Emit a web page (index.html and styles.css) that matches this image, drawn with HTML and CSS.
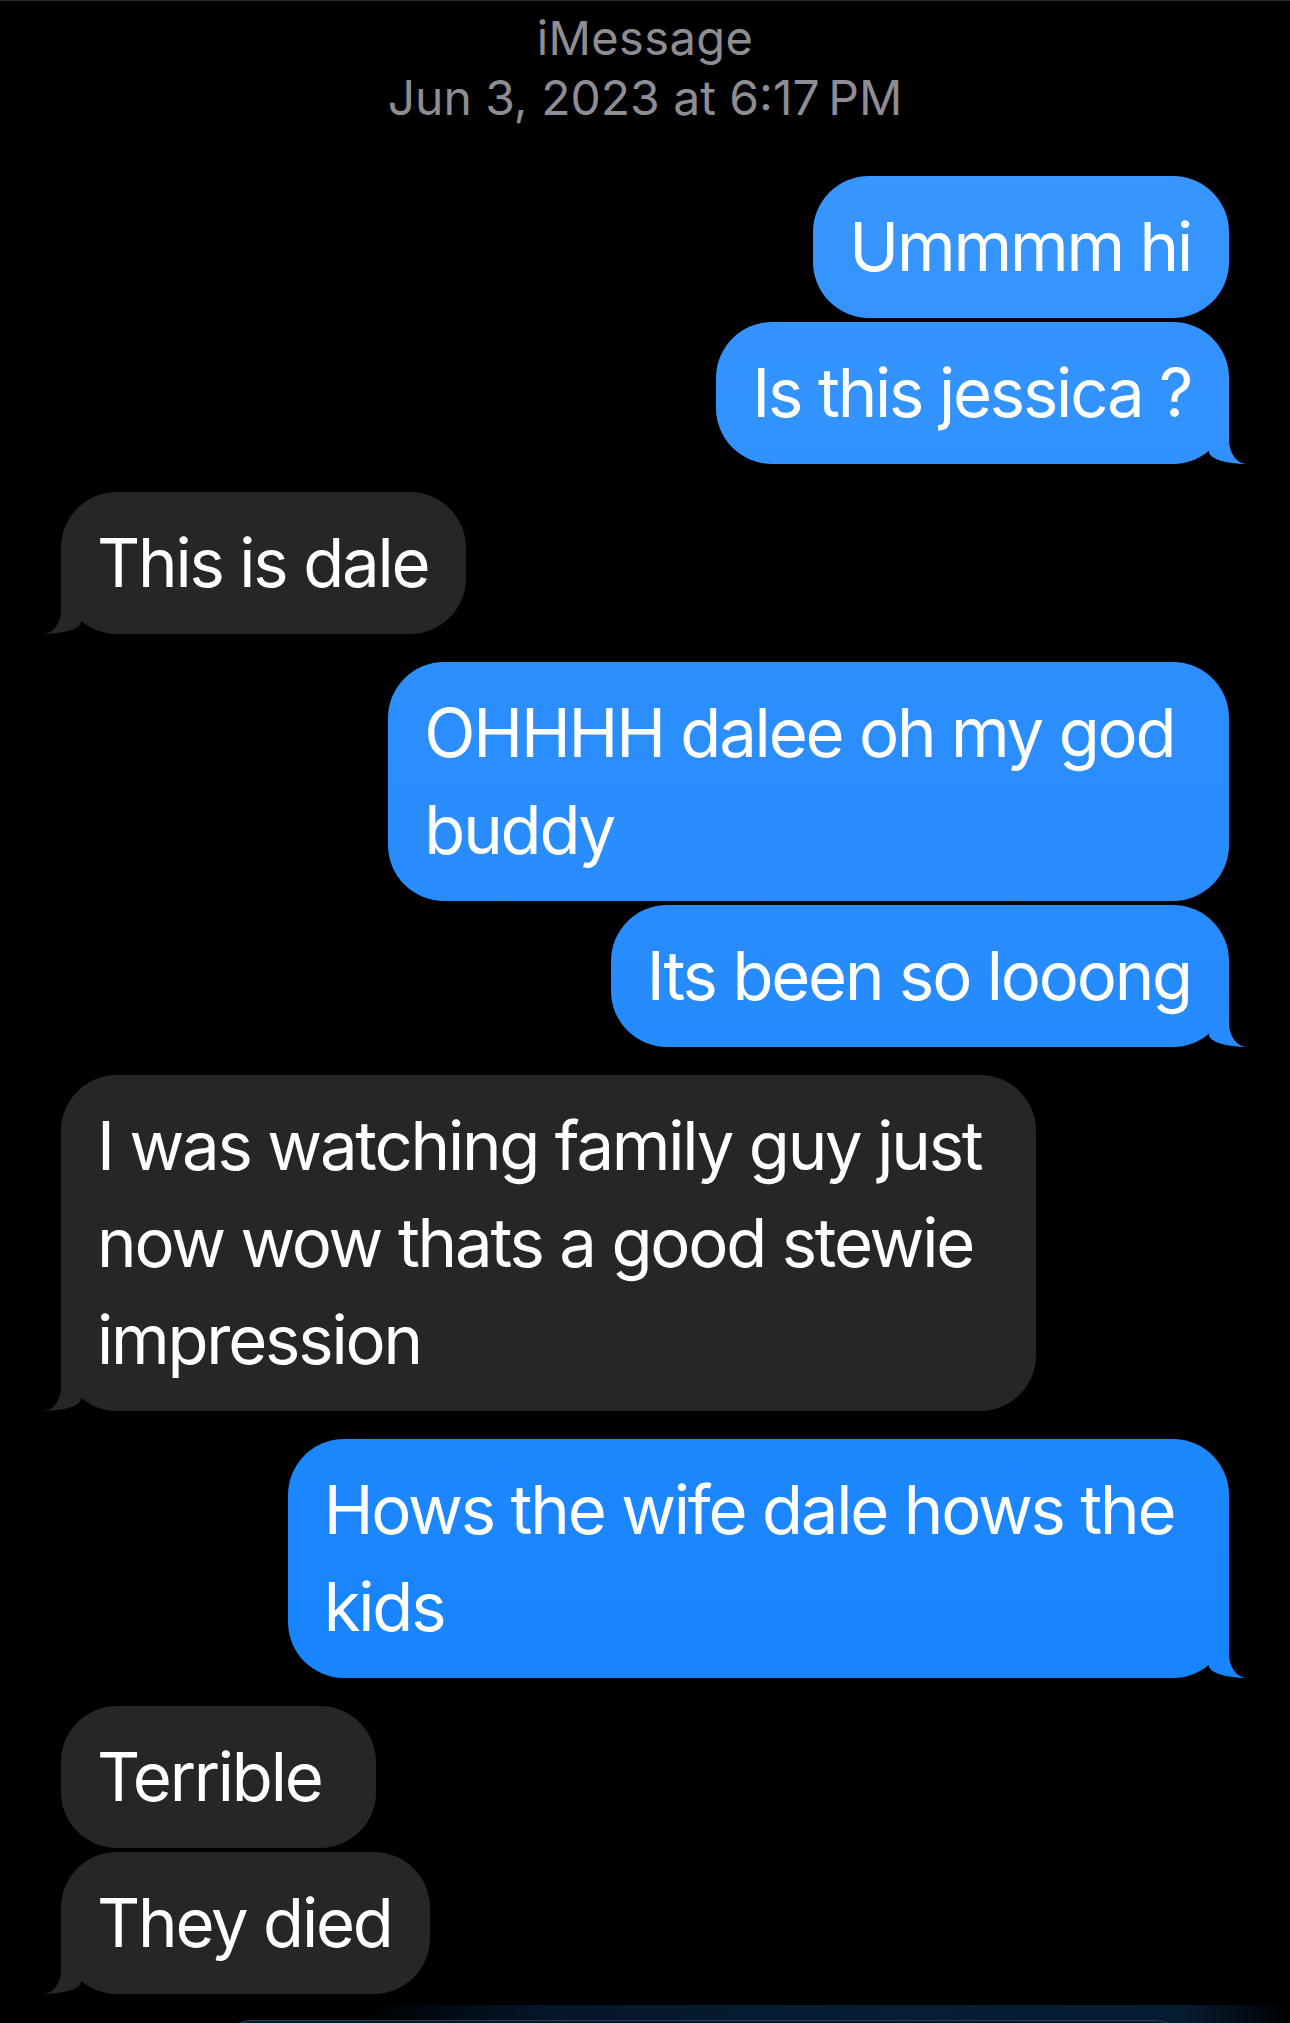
FILE: index.html
```html
<!DOCTYPE html>
<html lang="en">
<head>
<meta charset="utf-8">
<title>Messages</title>
<link rel="stylesheet" href="styles.css">
</head>
<body>
<div class="screen">
  <header class="thread-head">
    <div class="service">iMessage</div>
    <div class="stamp">Jun 3, 2023 at 6:17&#8239;PM</div>
  </header>
  <main class="thread">
    <div class="group sent">
      <p class="bubble">Ummmm hi</p>
      <p class="bubble tail">Is this jessica ?</p>
    </div>
    <div class="group received">
      <p class="bubble tail">This is dale</p>
    </div>
    <div class="group sent">
      <p class="bubble">OHHHH dalee oh my god&nbsp;<br>buddy</p>
      <p class="bubble tail">Its been so looong</p>
    </div>
    <div class="group received">
      <p class="bubble tail">I was watching family guy just&nbsp;<br>now wow thats a good stewie&nbsp;<br>impression</p>
    </div>
    <div class="group sent">
      <p class="bubble tail">Hows the wife dale hows the&nbsp;<br>kids</p>
    </div>
    <div class="group received">
      <p class="bubble">Terrible&nbsp;</p>
      <p class="bubble tail">They died</p>
    </div>
  </main>
  <footer class="composer-edge">
    <div class="composer"></div>
  </footer>
</div>
</body>
</html>
```
FILE: styles.css
```css
html, body {
  margin: 0;
  padding: 0;
  background: #000;
}

body {
  font-family: "Inter", "Noto Sans", sans-serif;
  color: #fff;
  -webkit-font-smoothing: antialiased;
}

.screen {
  width: 1290px;
  min-height: 2023px;
  border-top: 1px solid #2f2f31;
  box-sizing: border-box;
  display: flex;
  flex-direction: column;
}

.thread-head {
  display: flex;
  flex-direction: column;
  align-items: center;
  color: #8d8d93;
  padding-top: 9px;
}

.service {
  font-size: 47px;
  line-height: 56px;
  letter-spacing: 0.4px;
}

.stamp {
  font-size: 48px;
  line-height: 64px;
}

.thread {
  display: flex;
  flex-direction: column;
  gap: 28px;
  padding: 46px 61px 0;
}

.group {
  display: flex;
  flex-direction: column;
  gap: 4px;
}

.group.sent { align-items: flex-end; }
.group.received { align-items: flex-start; }

.bubble {
  position: relative;
  margin: 0;
  padding: 22px 38px 23px 36px;
  font-size: 67px;
  line-height: 97px;
  letter-spacing: -2.2px;
  border-radius: 56px;
  white-space: nowrap;
}

.sent .bubble {
  background: linear-gradient(180deg, #3b98ff 0%, #2a8dfe 40%, #1784fd 85%, #1482fd 100%) fixed;
}

.received .bubble {
  background: #262629;
}

.bubble.tail::before,
.bubble.tail::after {
  content: "";
  position: absolute;
  bottom: 0;
  height: 60px;
}

.sent .bubble.tail::before {
  right: -18px;
  width: 38px;
  background: linear-gradient(180deg, #3b98ff 0%, #2a8dfe 40%, #1784fd 85%, #1482fd 100%) fixed;
  border-bottom-left-radius: 38px 12px;
}

.sent .bubble.tail::after {
  right: -40px;
  width: 40px;
  background: #000;
  border-bottom-left-radius: 18px 24px;
}

.received .bubble.tail::before {
  left: -18px;
  width: 38px;
  background: #262629;
  border-bottom-right-radius: 38px 12px;
}

.received .bubble.tail::after {
  left: -40px;
  width: 40px;
  background: #000;
  border-bottom-right-radius: 18px 24px;
}

.composer-edge {
  margin-top: auto;
  height: 18px;
  background: linear-gradient(90deg, #000 0%, #000 28%, #04162a 42%, #071d35 70%, #061a30 92%, #000 100%);
  overflow: hidden;
}

.composer {
  margin: 15px 105px 0 222px;
  height: 40px;
  border-top: 1px solid #2b3f52;
  border-radius: 30px 30px 0 0;
  background: #0a1624;
}
```
